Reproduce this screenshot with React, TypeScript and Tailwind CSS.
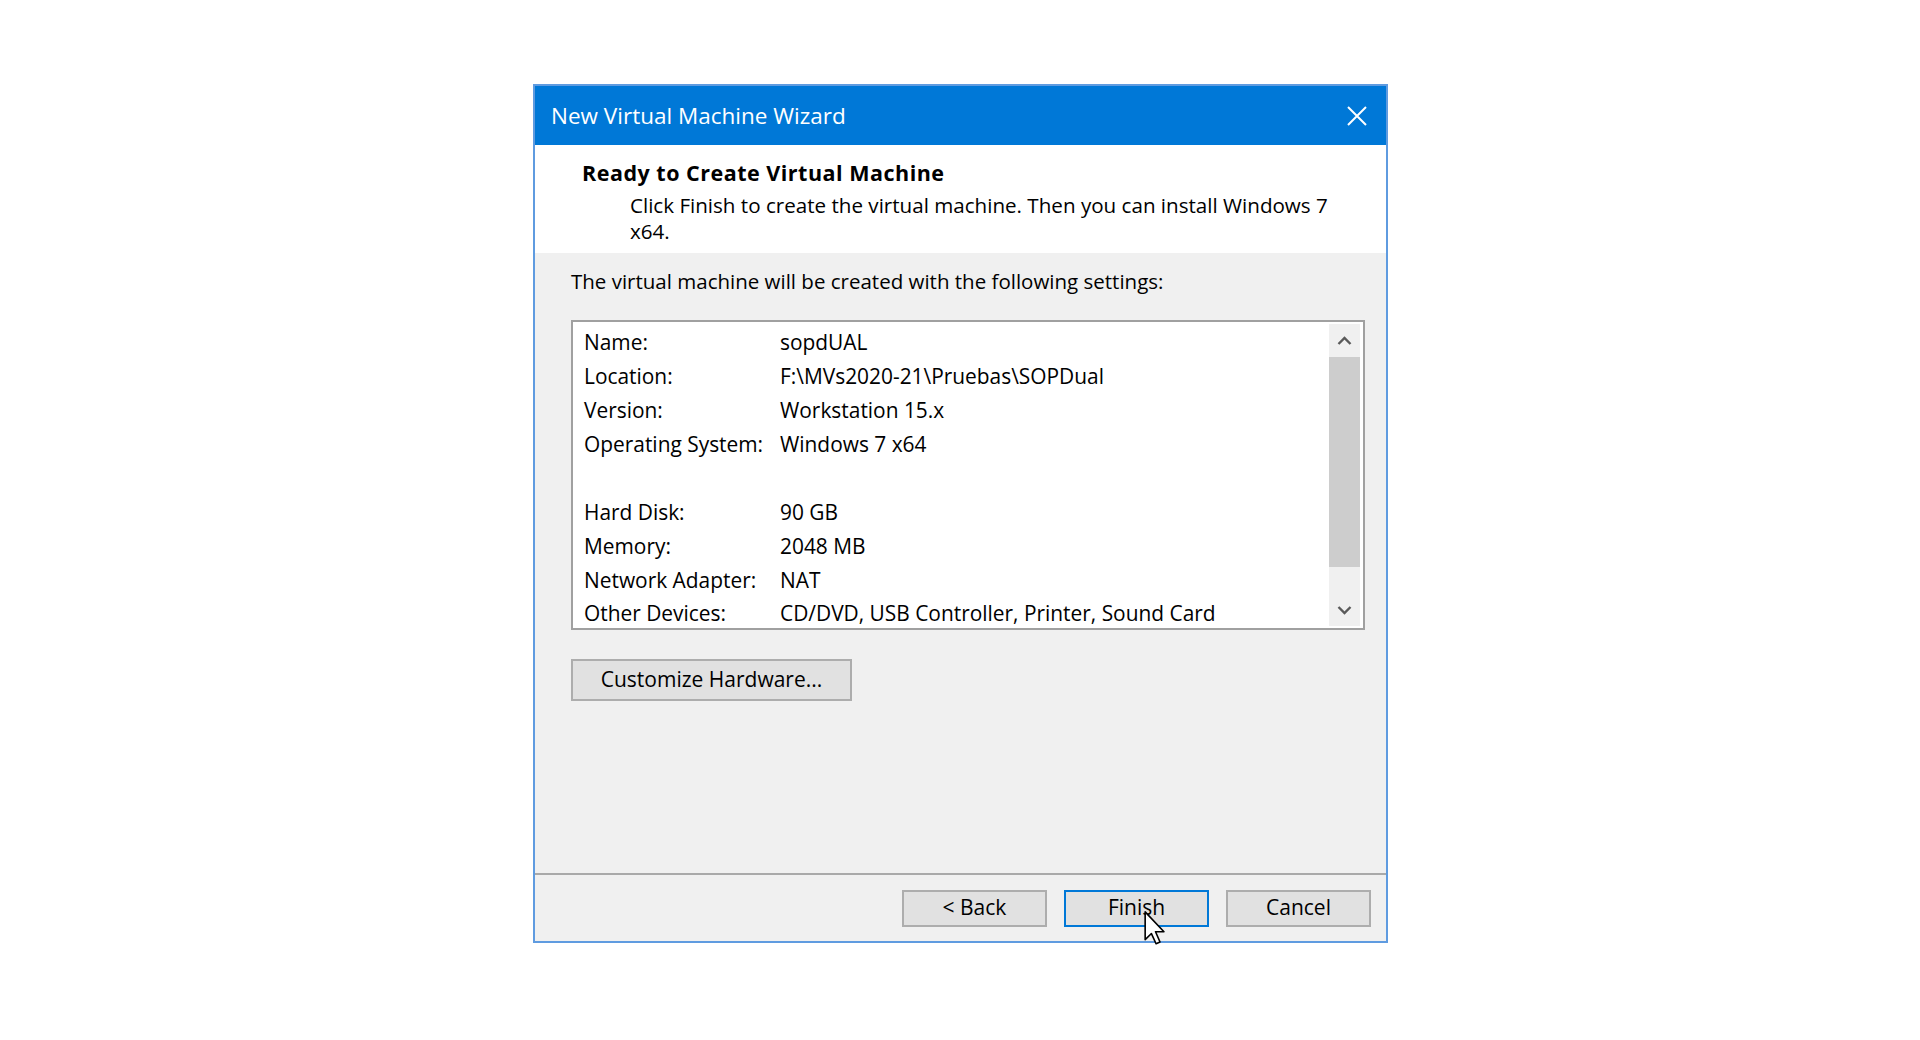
import React from "react";

const rows: [string, string][] = [
  ["Name:", "sopdUAL"],
  ["Location:", "F:\\MVs2020-21\\Pruebas\\SOPDual"],
  ["Version:", "Workstation 15.x"],
  ["Operating System:", "Windows 7 x64"],
  ["", ""],
  ["Hard Disk:", "90 GB"],
  ["Memory:", "2048 MB"],
  ["Network Adapter:", "NAT"],
  ["Other Devices:", "CD/DVD, USB Controller, Printer, Sound Card"],
];

function Chevron({ up }: { up?: boolean }) {
  return (
    <svg width="15" height="10" viewBox="0 0 15 10" fill="none">
      <path
        d={up ? "M1.5 8 L7.5 2 L13.5 8" : "M1.5 2 L7.5 8 L13.5 2"}
        stroke="#5a5a5a"
        strokeWidth="2.4"
      />
    </svg>
  );
}

function Cursor() {
  return (
    <svg width="22" height="34" viewBox="0 0 12 19" className="absolute left-[78px] top-[19px]">
      <path
        d="M0.5 0.5 L0.5 16 L4 12.6 L6.6 18.3 L8.8 17.3 L6.3 11.6 L11 11.6 Z"
        fill="#ffffff"
        stroke="#000000"
        strokeWidth="0.9"
        strokeLinejoin="round"
      />
    </svg>
  );
}

export default function App() {
  return (
    <div className="min-h-screen bg-white font-['Open_Sans',sans-serif] text-black">
      <div className="pl-[533px] pt-[84px]">
        <div className="w-[855px] h-[859px] border-2 border-[#5f9be0] bg-[#f0f0f0] flex flex-col">
          {/* title bar */}
          <div className="h-[59px] bg-[#0078d7] flex items-center justify-between pl-[16px] pr-[19px]">
            <span className="text-white text-[22.5px]">New Virtual Machine Wizard</span>
            <svg width="20" height="20" viewBox="0 0 20 20">
              <path d="M1 1 L19 19 M19 1 L1 19" stroke="#ffffff" strokeWidth="2" />
            </svg>
          </div>

          {/* header */}
          <div className="h-[108px] bg-white pt-[15px]">
            <div className="pl-[47px] text-[21.5px] font-bold tracking-[0.5px] leading-[26px]">
              Ready to Create Virtual Machine
            </div>
            <p className="pl-[95px] mt-[7px] w-[820px] text-[20.6px] leading-[25.7px]">
              Click Finish to create the virtual machine. Then you can install Windows 7 x64.
            </p>
          </div>

          {/* body */}
          <div className="flex-1 pl-[36px] pt-[15px]">
            <div className="text-[20.5px] leading-[26px]">The virtual machine will be created with the following settings:</div>
            <div className="mt-[26px] w-[794px] h-[310px] border-2 border-[#a0a0a0] bg-white flex">
              <div className="flex-1 pl-[11px] pt-[3px]">
                {rows.map(([label, value], i) => (
                  <div key={i} className="h-[34px] last:h-[31px] flex items-center last:items-start last:pt-[1.5px] text-[20.9px] leading-[28px] whitespace-nowrap">
                    <span className="w-[196px] shrink-0">{label}</span>
                    <span>{value}</span>
                  </div>
                ))}
              </div>
              <div className="w-[31px] my-[2px] mr-[3px] bg-[#f0f0f0] flex flex-col">
                <div className="h-[33px] flex items-center justify-center">
                  <Chevron up />
                </div>
                <div className="h-[210px] bg-[#cdcdcd]" />
                <div className="flex-1" />
                <div className="h-[33px] flex items-center justify-center">
                  <Chevron />
                </div>
              </div>
            </div>
            <button className="mt-[29px] w-[281px] h-[42px] bg-[#e1e1e1] border-2 border-[#adadad] text-[21px]">
              Customize Hardware...
            </button>
          </div>

          {/* separator */}
          <div className="h-[2px] bg-[#a9a9a9]" />

          {/* footer */}
          <div className="h-[66px] flex items-center justify-end gap-[17px] pr-[15px]">
            <button className="w-[145px] h-[37px] bg-[#e1e1e1] border-2 border-[#adadad] text-[21px]">&lt; Back</button>
            <button className="relative w-[145px] h-[37px] bg-[#e1e1e1] border-2 border-[#0078d7] text-[21px]">
              Finish
              <Cursor />
            </button>
            <button className="w-[145px] h-[37px] bg-[#e1e1e1] border-2 border-[#adadad] text-[21px]">Cancel</button>
          </div>
        </div>
      </div>
    </div>
  );
}
